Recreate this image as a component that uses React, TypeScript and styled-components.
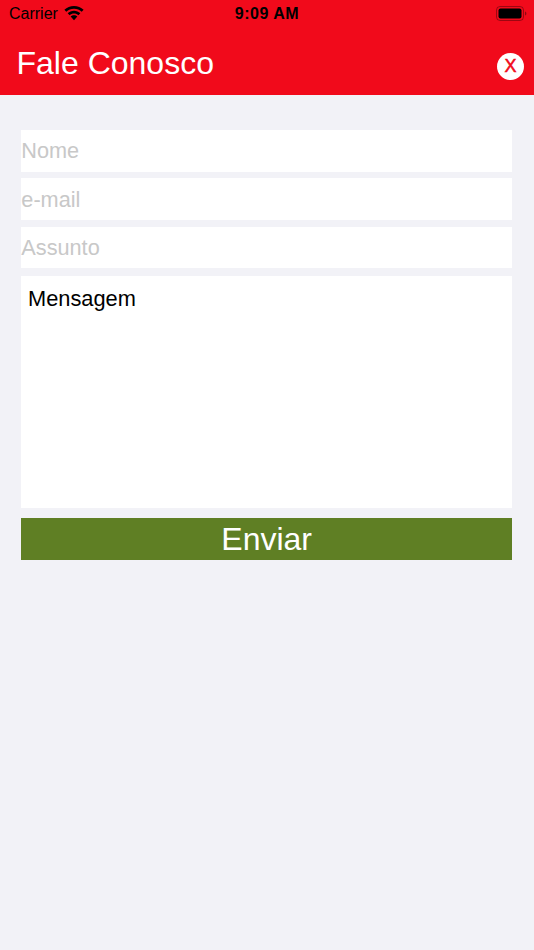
import {createGlobalStyle} from "styled-components";
import styled from "styled-components";

const GlobalStyle = createGlobalStyle`
html, body {
  margin: 0;
  padding: 0;
  background: #f2f2f7;
  font-family: "Liberation Sans", Arial, sans-serif;
}
`;

const Page = styled.div`
  width: 534px;
  height: 950px;
  overflow: hidden;
  background: #f2f2f7;
`;

const Header = styled.header`
  height: 95px;
  background: #f10a1b;
  display: flex;
  flex-direction: column;
`;

const StatusBar = styled.div`
  height: 27px;
  display: grid;
  grid-template-columns: 1fr auto 1fr;
  align-items: center;
  padding: 0 7px 0 9px;
  color: #000;
  font-size: 16px;
`;

const StatusLeft = styled.div`
  display: flex;
  align-items: center;
  gap: 6px;
`;

const Time = styled.div`
  margin-right: 2px;
  font-weight: 700;
  letter-spacing: 0.5px;
`;

const StatusRight = styled.div`
  display: flex;
  justify-content: flex-end;
`;

const TitleRow = styled.div`
  flex: 1;
  display: flex;
  align-items: center;
  justify-content: space-between;
  padding: 4px 10px 0 16.5px;
`;

const Title = styled.h1`
  margin: 0;
  font-size: 32px;
  font-weight: 400;
  color: #fff;
`;

const CloseButton = styled.button`
  width: 27px;
  height: 27px;
  margin-top: 7px;
  padding: 0;
  border: 0;
  border-radius: 50%;
  background: #fff;
  color: #f10a1b;
  font-family: inherit;
  font-size: 18px;
  line-height: 27px;
  text-align: center;
  -webkit-text-stroke: 0.5px #f10a1b;
`;

const Form = styled.form`
  display: flex;
  flex-direction: column;
  padding: 35px 22px 0 21.33px;
`;

const Field = styled.input`
  box-sizing: border-box;
  width: 100%;
  height: 41.5px;
  margin-bottom: 6.95px;
  padding: 1px 0 0;
  border: 0;
  outline: 0;
  border-radius: 0;
  background: #fff;
  font-family: inherit;
  font-size: 21.7px;

  &::placeholder {
    color: #c8c8c8;
    opacity: 1;
  }
`;

const Message = styled.textarea`
  box-sizing: border-box;
  display: block;
  width: 100%;
  height: 232px;
  margin: 0.3px 0 0;
  padding: 10px 6.67px;
  border: 0;
  outline: 0;
  border-radius: 0;
  resize: none;
  background: #fff;
  font-family: inherit;
  font-size: 21.8px;
  line-height: 25px;

  &::placeholder {
    color: #000;
    opacity: 1;
  }
`;

const Submit = styled.button`
  height: 42px;
  margin-top: 10px;
  padding: 0;
  border: 0;
  border-radius: 0;
  background: #5f7f24;
  color: #fff;
  font-family: inherit;
  font-size: 32px;
  line-height: 42px;
`;

const WifiIcon = () => (
  <svg width="20" height="15" viewBox="0 0 20 15">
    <path d="M10 0C6.300 0 2.900 1.400.4 3.800l1.900 2C4.300 3.900 7 2.800 10 2.800s5.700 1.100 7.700 3l1.900-2C17.100 1.400 13.700 0 10 0z" />
    <path d="M10 4.700c-2.400 0-4.700.9-6.300 2.500l1.900 2C6.800 8.100 8.300 7.500 10 7.500s3.200.6 4.400 1.700l1.900-2C14.700 5.600 12.400 4.700 10 4.700z" />
    <path d="M10 9.300c-1.300 0-2.500.5-3.300 1.300L10 14.200l3.300-3.600c-.8-.8-2-1.300-3.300-1.300z" />
  </svg>
);

const BatteryIcon = () => (
  <svg width="31" height="15" viewBox="0 0 31 15">
    <rect x="0.500" y="0.500" width="27" height="14" rx="3.500" fill="none" stroke="#000" strokeOpacity="0.35" />
    <rect x="2.500" y="2.500" width="23" height="10" rx="2" fill="#000" />
    <path d="M29 5.500v4c.8-.3 1.400-1.100 1.400-2S29.800 5.800 29 5.500z" fill="#000" fillOpacity="0.4" />
  </svg>
);

const App = () => {
  return (
    <Page>
      <GlobalStyle />
      <Header>
        <StatusBar>
          <StatusLeft>
            Carrier
            <WifiIcon />
          </StatusLeft>
          <Time>9:09 AM</Time>
          <StatusRight>
            <BatteryIcon />
          </StatusRight>
        </StatusBar>
        <TitleRow>
          <Title>Fale Conosco</Title>
          <CloseButton type="button">X</CloseButton>
        </TitleRow>
      </Header>
      <Form>
        <Field placeholder="Nome" />
        <Field placeholder="e-mail" />
        <Field placeholder="Assunto" />
        <Message placeholder="Mensagem" />
        <Submit type="button">Enviar</Submit>
      </Form>
    </Page>
  );
};

export default App;
